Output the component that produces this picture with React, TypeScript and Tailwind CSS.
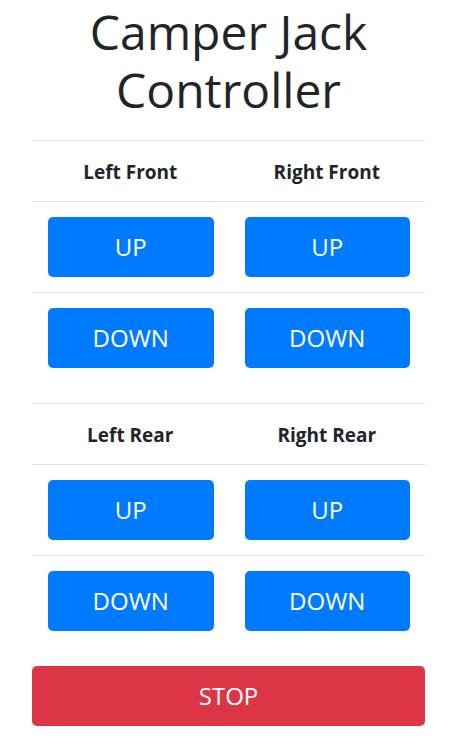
import React from 'react';

const font = { fontFamily: '"Open Sans", "Noto Sans", sans-serif' };

const JackTable = ({ left, right }: { left: string; right: string }) => {
  return (
    <div className="w-full">
      <div className="grid grid-cols-2 border-t border-[#dee2e6] h-[61px] items-center pt-[2px]">
        <div className="text-center text-[19px] font-bold text-[#212529]">{left}</div>
        <div className="text-center text-[19px] font-bold text-[#212529]">{right}</div>
      </div>
      {['UP', 'DOWN'].map(label => (
        <div key={label} className="grid grid-cols-2 border-t border-[#dee2e6] h-[91px] items-center pl-4 pr-[15px] gap-[31px]">
          <button className="h-[60px] rounded-[5px] bg-[#007bff] text-white text-[24px]">{label}</button>
          <button className="h-[60px] rounded-[5px] bg-[#007bff] text-white text-[24px]">{label}</button>
        </div>
      ))}
    </div>
  );
};

export default function App() {
  return (
    <div className="min-h-[741px] bg-white pl-8 pr-[30px] pt-[3px]" style={font}>
      <h1 className="text-center text-[48px] leading-[58px] font-medium text-[#212529] mb-[21px]">
        Camper Jack
        <br />
        Controller
      </h1>
      <JackTable left="Left Front" right="Right Front" />
      <div className="h-[20px]" />
      <JackTable left="Left Rear" right="Right Rear" />
      <button className="mt-[20px] w-full h-[60px] rounded-[5px] bg-[#dc3545] text-white text-[24px]">STOP</button>
    </div>
  );
}
